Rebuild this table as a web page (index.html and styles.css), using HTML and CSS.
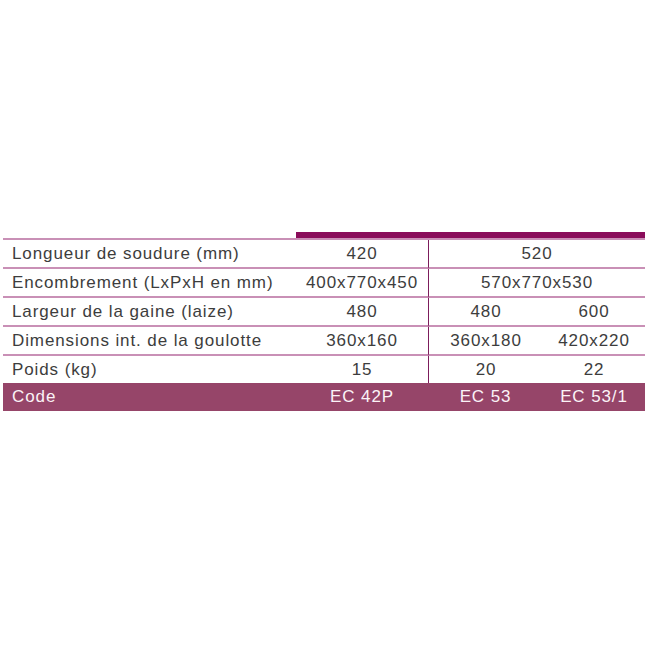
FILE: index.html
```html
<!DOCTYPE html>
<html lang="fr">
<head>
<meta charset="utf-8">
<title>Caractéristiques</title>
<link rel="stylesheet" href="styles.css">
</head>
<body>
<main class="page">
  <table class="spec">
    <colgroup>
      <col class="c-label">
      <col class="c-a">
      <col class="c-b">
      <col class="c-c">
    </colgroup>
    <tbody>
      <tr class="bar-row">
        <td class="bar-left"></td>
        <td class="bar" colspan="3"></td>
      </tr>
      <tr>
        <td class="label">Longueur de soudure (mm)</td>
        <td class="val">420</td>
        <td class="val sep" colspan="2">520</td>
      </tr>
      <tr>
        <td class="label">Encombrement (LxPxH en mm)</td>
        <td class="val">400x770x450</td>
        <td class="val sep" colspan="2">570x770x530</td>
      </tr>
      <tr>
        <td class="label">Largeur de la gaine (laize)</td>
        <td class="val">480</td>
        <td class="val sep">480</td>
        <td class="val">600</td>
      </tr>
      <tr>
        <td class="label">Dimensions int. de la goulotte</td>
        <td class="val">360x160</td>
        <td class="val sep">360x180</td>
        <td class="val">420x220</td>
      </tr>
      <tr class="last">
        <td class="label">Poids (kg)</td>
        <td class="val">15</td>
        <td class="val sep">20</td>
        <td class="val">22</td>
      </tr>
      <tr class="code-row">
        <td class="label">Code</td>
        <td class="val">EC 42P</td>
        <td class="val">EC 53</td>
        <td class="val">EC 53/1</td>
      </tr>
    </tbody>
  </table>
</main>
</body>
</html>
```
FILE: styles.css
```css
html, body {
  margin: 0;
  padding: 0;
  background: #ffffff;
}

.page {
  padding-top: 232px;
  padding-left: 3px;
}

.spec {
  table-layout: fixed;
  width: 642px;
  border-collapse: separate;
  border-spacing: 0;
  font-family: "Liberation Sans", Arial, sans-serif;
  font-size: 17px;
  letter-spacing: 0.9px;
  color: #3d3d3d;
}

.c-label { width: 293px; }
.c-a { width: 132px; }
.c-b { width: 115px; }
.c-c { width: 102px; }

.spec td {
  padding: 0;
  height: 27px;
  border-bottom: 2px solid #c990b6;
  white-space: nowrap;
  line-height: 27px;
}

.spec .bar-row td {
  height: 6px;
  line-height: 0;
  border-bottom: 2px solid #c990b6;
}

.spec .bar {
  background: #8a0c5a;
  border-bottom-color: #8a0c5a;
  height: 7px;
}

.spec .label {
  padding-left: 9px;
}

.spec .val {
  text-align: center;
}

.spec .sep {
  border-left: 1px solid #7c1d5c;
}

.spec .last td {
  border-bottom: none;
}

.spec .code-row td {
  background: #964569;
  color: #fbf3f7;
  height: 28px;
  line-height: 28px;
  border-bottom: none;
}
```
